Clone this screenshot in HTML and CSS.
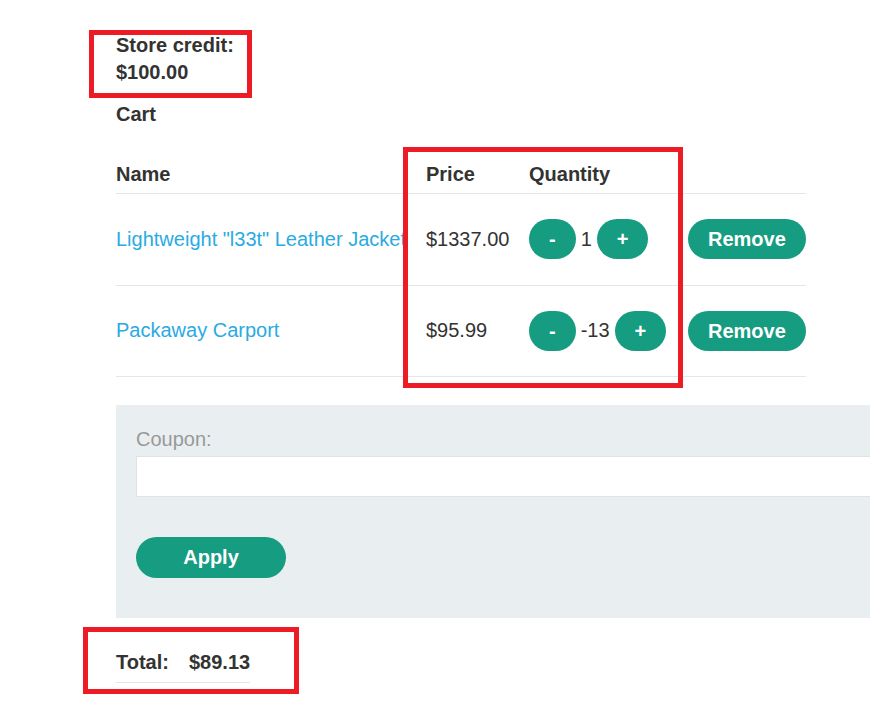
FILE: index.html
```html
<!DOCTYPE html>
<html lang="en">
<head>
<meta charset="utf-8">
<title>Cart</title>
<link rel="stylesheet" href="styles.css">
</head>
<body>
<div class="page">
  <div class="credit">
    <div>Store credit:</div>
    <div>$100.00</div>
    <span class="mark mark-credit"></span>
  </div>
  <div class="cart-title">Cart</div>
  <div class="cart-wrap">
    <table class="cart">
      <thead>
        <tr>
          <th class="c-name">Name</th>
          <th class="c-price">Price</th>
          <th class="c-qty">Quantity</th>
          <th class="c-rm"></th>
        </tr>
      </thead>
      <tbody>
        <tr>
          <td class="c-name"><a href="#" class="prod">Lightweight "l33t" Leather Jacket</a></td>
          <td class="c-price">$1337.00</td>
          <td class="c-qty"><div class="qty"><button class="btn">-</button><span>1</span><button class="btn">+</button></div></td>
          <td class="c-rm"><button class="btn">Remove</button></td>
        </tr>
        <tr>
          <td class="c-name"><a href="#" class="prod">Packaway Carport</a></td>
          <td class="c-price">$95.99</td>
          <td class="c-qty"><div class="qty"><button class="btn">-</button><span>-13</span><button class="btn">+</button></div></td>
          <td class="c-rm"><button class="btn">Remove</button></td>
        </tr>
      </tbody>
    </table>
    <span class="mark mark-table"></span>
  </div>
  <form class="coupon">
    <label class="coupon-label" for="coupon">Coupon:</label>
    <input class="coupon-input" id="coupon" type="text">
    <button class="btn btn-apply" type="button">Apply</button>
  </form>
  <div class="total-wrap">
    <table class="total">
      <tr>
        <th>Total:</th>
        <th>$89.13</th>
      </tr>
    </table>
    <span class="mark mark-total"></span>
  </div>
</div>
</body>
</html>
```

FILE: styles.css
```css
html {
  overflow: hidden;
}

body {
  margin: 0;
  padding: 0;
  min-height: 702px;
  background: #fff;
  font-family: "Liberation Sans", Arial, sans-serif;
  font-size: 20px;
  color: #333332;
}

.page {
  padding: 32px 0 20px 116px;
}

.credit {
  position: relative;
  font-weight: bold;
  line-height: 27px;
}

.cart-title {
  margin-top: 15px;
  font-weight: bold;
  line-height: 27px;
}

.cart-wrap {
  position: relative;
  margin-top: 33px;
  width: 690px;
}

.cart {
  border-collapse: collapse;
  width: 690px;
  table-layout: fixed;
}

.cart th {
  text-align: left;
  font-weight: bold;
  line-height: 27px;
  padding: 0 0 5px;
  border-bottom: 1px solid #e6e6e6;
}

.cart td {
  height: 90.5px;
  padding: 0;
  line-height: 27px;
  border-bottom: 1px solid #e6e6e6;
  white-space: nowrap;
  overflow: hidden;
  vertical-align: middle;
}

.c-name { width: 310px; }
.c-price { width: 103px; }
.c-qty { width: 159px; }
.c-rm { width: 118px; }

.prod {
  color: #29abe2;
  text-decoration: none;
}

.qty {
  display: flex;
  align-items: center;
  gap: 5px;
}

.btn {
  display: inline-block;
  vertical-align: middle;
  height: 40px;
  padding: 0 20px;
  border: 0;
  border-radius: 20px;
  background: #169c80;
  color: #fff;
  font-family: inherit;
  font-size: 20px;
  font-weight: bold;
  line-height: 40px;
  margin: 0;
}

.coupon {
  margin-top: 28px;
  background: #e9eef0;
  padding: 21px 20px 40px;
  width: 800px;
  display: flex;
  flex-direction: column;
  align-items: flex-start;
}

.coupon-label {
  color: #999999;
  line-height: 27px;
}

.coupon-input {
  box-sizing: border-box;
  margin-top: 3px;
  width: 760px;
  height: 41px;
  border: 1px solid #e2e2e2;
  background: #fff;
  font-family: inherit;
  font-size: 20px;
  padding: 0 10px;
  margin-bottom: 40px;
}

.btn-apply {
  height: 41px;
  line-height: 41px;
  min-width: 150px;
  border-radius: 21px;
}

.total-wrap {
  position: relative;
  margin-top: 31px;
}

.total {
  border-collapse: collapse;
}

.total th {
  text-align: left;
  font-weight: bold;
  line-height: 27px;
  padding: 0 0 6px;
  border-bottom: 1px solid #e6e6e6;
}

.total th:first-child {
  padding-right: 20px;
}

.mark {
  position: absolute;
  box-sizing: border-box;
  border: 5px solid #ed1c24;
  pointer-events: none;
}

.mark-credit {
  left: -27px;
  top: -2px;
  width: 163px;
  height: 68px;
}

.mark-table {
  left: 287px;
  top: -14px;
  width: 280px;
  height: 241px;
}

.mark-total {
  left: -33px;
  top: -22px;
  width: 216px;
  height: 67px;
}
```
